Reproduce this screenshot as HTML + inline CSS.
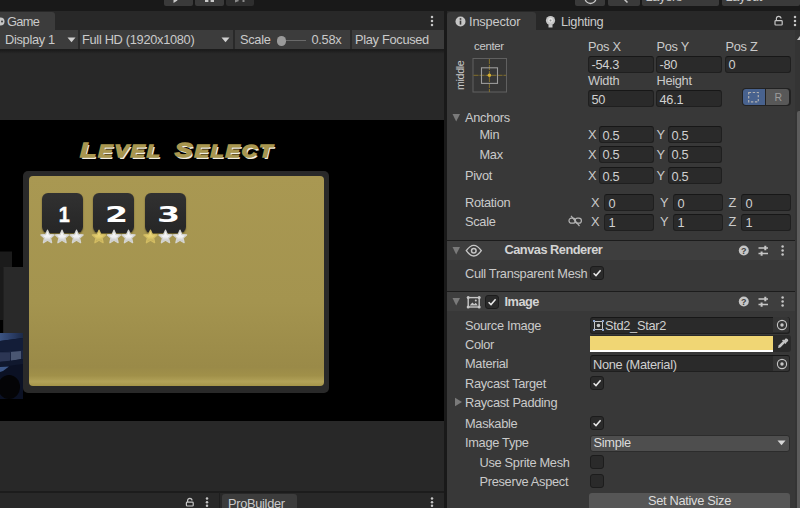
<!DOCTYPE html>
<html><head><meta charset="utf-8"><title>Unity</title>
<style>
html,body{margin:0;padding:0;}
body{width:800px;height:508px;overflow:hidden;background:#282828;position:relative;font-family:"Liberation Sans",sans-serif;}
.a{position:absolute;}
.t{position:absolute;font-size:12.8px;letter-spacing:-0.3px;line-height:16px;color:#cacaca;white-space:nowrap;}
.f{position:absolute;background:#2a2a2a;border:1px solid #1f1f1f;border-top-color:#171717;border-radius:3px;box-sizing:border-box;height:17px;}
.f span{position:absolute;left:3px;top:0.5px;font-size:12.8px;letter-spacing:-0.3px;line-height:15px;color:#d0d0d0;white-space:nowrap;}
.cb{position:absolute;width:13.5px;height:14px;background:#2a2a2a;border:1px solid #1c1c1c;border-radius:3px;box-sizing:border-box;}
.cb svg{position:absolute;left:1px;top:1px;}
.lvl{background:linear-gradient(#313131,#262626);border-radius:6px;box-shadow:0 1px 1.5px rgba(30,25,5,0.55);}
.tb{position:absolute;top:0;height:5.5px;background:#3a3a3a;border-radius:0 0 2px 2px;overflow:hidden;}
</style></head><body>

<!-- top toolbar -->
<div class="a" style="left:0;top:0;width:800px;height:11px;background:#191919;"></div>
<div class="tb" style="left:164px;width:29px;"><svg class="a" style="left:0;top:0" width="29" height="6"><path d="M9.5 -6 L13.5 0.6 L9.5 3 Z" fill="#c8c8c8"/></svg></div>
<div class="tb" style="left:195px;width:29px;"><svg class="a" style="left:0;top:0" width="29" height="6"><rect x="10" y="-3" width="3.4" height="5" fill="#c8c8c8"/><rect x="15.6" y="-3" width="3.4" height="5" fill="#c8c8c8"/></svg></div>
<div class="tb" style="left:226px;width:28px;background:#2e2e2e;"><svg class="a" style="left:0;top:0" width="28" height="6"><path d="M9 -4 L13 1 L9 2.5 Z" fill="#8a8a8a"/><rect x="16.5" y="-3" width="2" height="5" fill="#8a8a8a"/></svg></div>
<div class="tb" style="left:574.5px;width:30.5px;"><svg class="a" style="left:0;top:0" width="31" height="6"><path d="M10 -2 A5.5 5.5 0 0 0 21 -2" fill="none" stroke="#c8c8c8" stroke-width="1.3"/></svg></div>
<div class="tb" style="left:608px;width:31.5px;"><svg class="a" style="left:0;top:0" width="32" height="6"><path d="M16 -1 L19.5 2.6" fill="none" stroke="#c8c8c8" stroke-width="1.5"/></svg></div>
<div class="tb" style="left:642px;width:77px;"><div class="t" style="left:3.5px;top:-11px;">Layers</div></div>
<div class="tb" style="left:722px;width:78px;"><div class="t" style="left:3.5px;top:-11px;">Layout</div></div>

<!-- tab bar left -->
<div class="a" style="left:0;top:11px;width:444px;height:19px;background:#282828;"></div>
<div class="a" style="left:0;top:12px;width:55px;height:18px;background:#3c3c3c;border-radius:0 3px 0 0;"></div>
<svg class="a" style="left:-4px;top:17px" width="9" height="9"><circle cx="4.5" cy="4.5" r="4" fill="#c6c6c6"/><circle cx="6" cy="4.5" r="1" fill="#3c3c3c"/></svg>
<div class="t" style="left:7px;top:14px;letter-spacing:-0.7px;">Game</div>
<svg class="a" style="left:429px;top:15px" width="6" height="13"><circle cx="3" cy="2" r="1.25" fill="#c6c6c6"/><circle cx="3" cy="6" r="1.25" fill="#c6c6c6"/><circle cx="3" cy="10" r="1.25" fill="#c6c6c6"/></svg>

<!-- game toolbar -->
<div class="a" style="left:0;top:30px;width:444px;height:19.2px;background:#3c3c3c;border-bottom:1.3px solid #1c1c1c;"></div>
<div class="a" style="left:77.8px;top:30px;width:1.8px;height:19px;background:#292929;"></div>
<div class="a" style="left:233.3px;top:30px;width:1.8px;height:19px;background:#292929;"></div>
<div class="a" style="left:350.3px;top:30px;width:1.8px;height:19px;background:#292929;"></div>
<div class="t" style="left:5px;top:32px;">Display 1</div>
<svg class="a" style="left:66.7px;top:37px" width="9" height="6"><path d="M0.5 0.5 L8.5 0.5 L4.5 5.2 Z" fill="#d0d0d0"/></svg>
<div class="t" style="left:82px;top:32px;">Full HD (1920x1080)</div>
<svg class="a" style="left:221px;top:37px" width="9" height="6"><path d="M0.5 0.5 L8.5 0.5 L4.5 5.2 Z" fill="#d0d0d0"/></svg>
<div class="t" style="left:240px;top:32px;">Scale</div>
<div class="a" style="left:281px;top:40px;width:25px;height:1.2px;background:#6a6a6a;"></div>
<div class="a" style="left:276.5px;top:36px;width:9.5px;height:9.5px;border-radius:5px;background:#9a9a9a;"></div>
<div class="t" style="left:311.5px;top:32px;">0.58x</div>
<div class="t" style="left:355px;top:32px;">Play Focused</div>

<!-- game view -->
<div class="a" style="left:0;top:50px;width:444px;height:70px;background:linear-gradient(#1b1b1b 0px,#202020 1.5px,#272727 3.5px,#282828 4px);"></div>
<div class="a" style="left:0;top:120px;width:444px;height:301.4px;background:#000;"></div>
<div class="a" style="left:0;top:421px;width:444px;height:69px;background:#282828;"></div>

<!-- 3D stuff at left -->
<svg class="a" style="left:0;top:240px" width="30" height="160">
  <defs><linearGradient id="bl" x1="0" y1="0" x2="1" y2="0"><stop offset="0" stop-color="#3c5482"/><stop offset="0.5" stop-color="#2c3f68"/><stop offset="1" stop-color="#1c2946"/></linearGradient></defs>
  <rect x="0" y="11.5" width="12" height="16" fill="#1b1b1b"/>
  <rect x="0" y="27" width="3.2" height="53" fill="#1a1a1a"/>
  <rect x="3.2" y="27" width="20" height="66" fill="#292929"/>
  <rect x="0" y="93" width="23" height="66" fill="#0b1124"/>
  <path d="M0 93 H23 V98 L0 101 Z" fill="url(#bl)"/>
  <path d="M0 101 L23 98 V110 L0 112 Z" fill="#131d38"/>
  <path d="M0 112 L23 110 V119 L0 122 Z" fill="#1a2440"/>
  <rect x="0" y="112.5" width="10" height="9" fill="#2c3654"/>
  <path d="M11 112 L21 111 V119 L11 121 Z" fill="#4a5672"/>
  <path d="M0 122 L23 119 V124 L0 127 Z" fill="#10182e"/>
  <path d="M0 127 L9 126.5 L3 131 L0 132 Z" fill="#3e5888"/>
  <ellipse cx="9" cy="147" rx="11" ry="12" fill="#040406"/>
</svg>

<!-- level select -->
<div id="title" class="a" style="left:80px;top:138px;font:italic bold 16px 'Liberation Sans',sans-serif;color:#a8964f;letter-spacing:1.5px;white-space:nowrap;text-shadow:1.2px 2.2px 0 #f2eee0;-webkit-text-stroke:1.3px #a8964f;transform-origin:0 0;transform:scaleX(1.33);line-height:24px;text-transform:uppercase;"><span style="font-size:20px">L</span>evel <span style="font-size:20px;margin-left:4px">S</span>elect</div>
<div class="a" style="left:23.2px;top:170.5px;width:306.3px;height:222px;background:#292929;border-radius:5px;"></div>
<div class="a" style="left:29.2px;top:176px;width:294.6px;height:210px;border-radius:4px;background:linear-gradient(#a99852 0%,#a4944f 60%,#9a8a48 91%,#a09049 95%,#b2a258 98%,#a49448 100%);"></div>

<!-- level buttons -->
<div class="a lvl" style="left:42px;top:192.6px;width:41px;height:40px;"></div>
<div class="a lvl" style="left:93.2px;top:192.6px;width:41.2px;height:40px;"></div>
<div class="a lvl" style="left:145.3px;top:192.6px;width:41px;height:40px;"></div>
<div class="a dg" style="left:44px;top:203.5px;width:40.5px;text-align:center;font:bold 22px 'Liberation Sans',sans-serif;-webkit-text-stroke:0.5px #fff;color:#fff;line-height:22px;transform:scaleX(0.9);">1</div>
<div class="a dg" style="left:96px;top:204px;width:41px;text-align:center;font:bold 20.5px 'DejaVu Sans','Liberation Sans',sans-serif;color:#fff;line-height:22px;transform:scaleX(1.62);">2</div>
<div class="a dg" style="left:147.6px;top:204px;width:41px;text-align:center;font:bold 20.5px 'DejaVu Sans','Liberation Sans',sans-serif;color:#fff;line-height:22px;transform:scaleX(1.62);">3</div>
<svg class="a" style="left:38px;top:228px" width="152" height="18">
 <defs> <linearGradient id="gw" x1="0" y1="0" x2="0" y2="1"><stop offset="0" stop-color="#ffffff"/><stop offset="0.55" stop-color="#f0f0f0"/><stop offset="1" stop-color="#b4b4b4"/></linearGradient>
 <linearGradient id="gy" x1="0" y1="0" x2="0" y2="1"><stop offset="0" stop-color="#f6e48c"/><stop offset="0.55" stop-color="#e2cc6c"/><stop offset="1" stop-color="#b29e50"/></linearGradient></defs>
 <g fill="url(#gw)" stroke="#d4d4d0" stroke-width="1.3" stroke-linejoin="round">
  <path transform="translate(9.5 8.8)" d="M0 -6.6 L1.9 -2.3 L6.6 -1.8 L3.1 1.3 L4.1 5.9 L0 3.5 L-4.1 5.9 L-3.1 1.3 L-6.6 -1.8 L-1.9 -2.3 Z"/><path transform="translate(24 8.8)" d="M0 -6.6 L1.9 -2.3 L6.6 -1.8 L3.1 1.3 L4.1 5.9 L0 3.5 L-4.1 5.9 L-3.1 1.3 L-6.6 -1.8 L-1.9 -2.3 Z"/><path transform="translate(38.5 8.8)" d="M0 -6.6 L1.9 -2.3 L6.6 -1.8 L3.1 1.3 L4.1 5.9 L0 3.5 L-4.1 5.9 L-3.1 1.3 L-6.6 -1.8 L-1.9 -2.3 Z"/>
  <path transform="translate(76 8.8)" d="M0 -6.6 L1.9 -2.3 L6.6 -1.8 L3.1 1.3 L4.1 5.9 L0 3.5 L-4.1 5.9 L-3.1 1.3 L-6.6 -1.8 L-1.9 -2.3 Z"/><path transform="translate(90.5 8.8)" d="M0 -6.6 L1.9 -2.3 L6.6 -1.8 L3.1 1.3 L4.1 5.9 L0 3.5 L-4.1 5.9 L-3.1 1.3 L-6.6 -1.8 L-1.9 -2.3 Z"/>
  <path transform="translate(127.5 8.8)" d="M0 -6.6 L1.9 -2.3 L6.6 -1.8 L3.1 1.3 L4.1 5.9 L0 3.5 L-4.1 5.9 L-3.1 1.3 L-6.6 -1.8 L-1.9 -2.3 Z"/><path transform="translate(142 8.8)" d="M0 -6.6 L1.9 -2.3 L6.6 -1.8 L3.1 1.3 L4.1 5.9 L0 3.5 L-4.1 5.9 L-3.1 1.3 L-6.6 -1.8 L-1.9 -2.3 Z"/>
 </g>
 <g fill="url(#gy)" stroke="#d2bc62" stroke-width="1.3" stroke-linejoin="round">
  <path transform="translate(61 8.8)" d="M0 -6.6 L1.9 -2.3 L6.6 -1.8 L3.1 1.3 L4.1 5.9 L0 3.5 L-4.1 5.9 L-3.1 1.3 L-6.6 -1.8 L-1.9 -2.3 Z"/><path transform="translate(112.5 8.8)" d="M0 -6.6 L1.9 -2.3 L6.6 -1.8 L3.1 1.3 L4.1 5.9 L0 3.5 L-4.1 5.9 L-3.1 1.3 L-6.6 -1.8 L-1.9 -2.3 Z"/>
 </g>
</svg>

<!-- bottom tab bar left -->
<div class="a" style="left:0;top:491px;width:444px;height:18px;background:#282828;border-top:2px solid #1c1c1c;box-sizing:border-box;"></div><div class="a" style="left:219px;top:492px;width:1px;height:16px;background:#1e1e1e;"></div>
<svg class="a" style="left:184px;top:495px" width="12" height="14"><path d="M3.6 7 V5.6 A2.2 2.2 0 0 1 8 5.6" fill="none" stroke="#c6c6c6" stroke-width="1.2"/><rect x="2.4" y="7.2" width="6.8" height="3.8" rx="0.8" fill="none" stroke="#c6c6c6" stroke-width="1.2"/></svg>
<svg class="a" style="left:203.5px;top:496px" width="6" height="14"><circle cx="3" cy="2.6" r="1.25" fill="#c6c6c6"/><circle cx="3" cy="6.2" r="1.25" fill="#c6c6c6"/><circle cx="3" cy="9.8" r="1.25" fill="#c6c6c6"/></svg>
<svg class="a" style="left:428.8px;top:496px" width="6" height="14"><circle cx="3" cy="2.6" r="1.25" fill="#c6c6c6"/><circle cx="3" cy="6.2" r="1.25" fill="#c6c6c6"/><circle cx="3" cy="9.8" r="1.25" fill="#c6c6c6"/></svg>
<div class="a" style="left:221.5px;top:493.5px;width:75.5px;height:15px;background:#3c3c3c;border-radius:3px 3px 0 0;"></div>
<div class="t" style="left:228px;top:495.5px;">ProBuilder</div>

<!-- splitter -->
<div class="a" style="left:444px;top:11px;width:2.5px;height:497px;background:#191919;"></div>

<!-- inspector -->
<div class="a" style="left:446.5px;top:11px;width:353.5px;height:19px;background:#282828;"></div>
<div class="a" style="left:446.5px;top:30px;width:353.5px;height:478px;background:#383838;"></div>
<div class="a" style="left:446.5px;top:12px;width:89.5px;height:18px;background:#383838;border-radius:3px 3px 0 0;"></div>
<svg class="a" style="left:455px;top:16px" width="11" height="11"><circle cx="5.5" cy="5.5" r="5" fill="#c6c6c6"/><rect x="4.7" y="4.6" width="1.6" height="4" fill="#383838"/><rect x="4.7" y="2.2" width="1.6" height="1.6" fill="#383838"/></svg>
<div class="t" style="left:469px;top:14px;letter-spacing:-0.15px;">Inspector</div>
<svg class="a" style="left:545px;top:15px" width="11" height="14"><circle cx="5.5" cy="5.5" r="4.6" fill="#c6c6c6"/><rect x="3.5" y="9.5" width="4" height="3" fill="#c6c6c6"/><circle cx="5.5" cy="5.2" r="2.4" fill="#e4e4e4"/><circle cx="5.5" cy="5.4" r="1" fill="#909090"/></svg>
<div class="t" style="left:561px;top:14px;">Lighting</div>
<svg class="a" style="left:772.5px;top:14px" width="13" height="14"><path d="M3.4 6.6 V4.6 A2.3 2.3 0 0 1 8 4.6" fill="none" stroke="#c6c6c6" stroke-width="1.2"/><rect x="2" y="6.6" width="7.2" height="4.4" rx="0.8" fill="none" stroke="#c6c6c6" stroke-width="1.2"/></svg>
<svg class="a" style="left:792px;top:15px" width="6" height="13"><circle cx="3" cy="2" r="1.25" fill="#c6c6c6"/><circle cx="3" cy="6" r="1.25" fill="#c6c6c6"/><circle cx="3" cy="10" r="1.25" fill="#c6c6c6"/></svg>

<!-- scrollbar -->
<div class="a" style="left:795px;top:30px;width:5px;height:478px;background:#343434;"></div>
<div class="a" style="left:797px;top:111px;width:3px;height:397px;background:#5c5c5c;border-radius:2px 0 0 0;"></div>
<svg class="a" style="left:797px;top:36px" width="3" height="5"><path d="M0 4 L3 0 L3 4Z" fill="#c6c6c6"/></svg>

<!-- rect transform -->
<div class="t" style="left:474px;top:38px;font-size:11.4px;">center</div>
<div class="t" style="left:461px;top:75px;font-size:10.6px;transform-origin:0 0;transform:translate(-9px,15px) rotate(-90deg);">middle</div>
<svg class="a" style="left:472px;top:57px" width="36" height="37">
  <rect x="1" y="1.5" width="33.5" height="33.5" fill="#363636" stroke="#606060" stroke-width="1"/>
  <path d="M17.4 2 V35 M1.5 18.3 H34" stroke="#84702c" stroke-width="1" stroke-dasharray="5 1"/>
  <rect x="9.5" y="10.8" width="16" height="15.6" fill="none" stroke="#9c9c9c" stroke-width="1.1"/>
  <circle cx="17.4" cy="18.3" r="1.8" fill="#d4ae34"/>
</svg>

<div class="t" style="left:588px;top:38.5px;">Pos X</div>
<div class="t" style="left:656.5px;top:38.5px;">Pos Y</div>
<div class="t" style="left:725.5px;top:38.5px;">Pos Z</div>
<div class="f" style="left:587.5px;top:55.5px;width:66px;"><span>-54.3</span></div>
<div class="f" style="left:655.5px;top:55.5px;width:66px;"><span>-80</span></div>
<div class="f" style="left:724.5px;top:55.5px;width:66.5px;"><span>0</span></div>
<div class="t" style="left:588px;top:73px;">Width</div>
<div class="t" style="left:656.5px;top:73px;">Height</div>
<div class="f" style="left:587.5px;top:90px;width:66px;"><span>50</span></div>
<div class="f" style="left:655.5px;top:90px;width:66px;"><span>46.1</span></div>
<div class="a" style="left:741.5px;top:87.7px;width:49px;height:18.3px;background:#222;border-radius:4px;"></div>
<div class="a" style="left:742.5px;top:88.7px;width:22.5px;height:16.3px;background:#48628e;border-radius:3px 0 0 3px;"></div>
<div class="a" style="left:765.8px;top:88.7px;width:23.7px;height:16.3px;background:#585858;border-radius:0 3px 3px 0;"></div>
<svg class="a" style="left:747px;top:90.5px" width="14" height="13"><rect x="1.7" y="1.5" width="9.6" height="9.4" fill="none" stroke="#b0b0b0" stroke-width="1.2" stroke-dasharray="2.4 1.6"/></svg>
<div class="t" style="left:774.5px;top:89px;color:#9c9c9c;font-size:10.5px;">R</div>

<svg class="a" style="left:452.4px;top:113px" width="9" height="10"><path d="M0.5 1 L8 1 L4.2 8.5 Z" fill="#7a7a7a"/></svg>
<div class="t" style="left:465px;top:110px;">Anchors</div>
<div class="t" style="left:479.5px;top:127px;">Min</div>
<div class="t" style="left:479.5px;top:146.5px;">Max</div>
<div class="t" style="left:465px;top:167.5px;">Pivot</div>
<div class="t" style="left:465px;top:194.5px;">Rotation</div>
<div class="t" style="left:465px;top:214px;">Scale</div>

<div class="t" style="left:588px;top:127px;">X</div><div class="f" style="left:598.5px;top:126px;width:55px;"><span>0.5</span></div>
<div class="t" style="left:656.5px;top:127px;">Y</div><div class="f" style="left:667.5px;top:126px;width:54px;"><span>0.5</span></div>
<div class="t" style="left:588px;top:146.5px;">X</div><div class="f" style="left:598.5px;top:145.5px;width:55px;"><span>0.5</span></div>
<div class="t" style="left:656.5px;top:146.5px;">Y</div><div class="f" style="left:667.5px;top:145.5px;width:54px;"><span>0.5</span></div>
<div class="t" style="left:588px;top:167.5px;">X</div><div class="f" style="left:598.5px;top:167px;width:55px;"><span>0.5</span></div>
<div class="t" style="left:656.5px;top:167.5px;">Y</div><div class="f" style="left:667.5px;top:167px;width:54px;"><span>0.5</span></div>

<div class="t" style="left:591px;top:194.5px;">X</div><div class="f" style="left:604px;top:194px;width:50px;"><span style="left:3.5px">0</span></div>
<div class="t" style="left:660px;top:194.5px;">Y</div><div class="f" style="left:673px;top:194px;width:49.5px;"><span style="left:3.5px">0</span></div>
<div class="t" style="left:728.5px;top:194.5px;">Z</div><div class="f" style="left:741px;top:194px;width:50px;"><span style="left:3.5px">0</span></div>
<div class="t" style="left:591px;top:214px;">X</div><div class="f" style="left:604px;top:213.5px;width:50px;"><span style="left:3.5px">1</span></div>
<div class="t" style="left:660px;top:214px;">Y</div><div class="f" style="left:673px;top:213.5px;width:49.5px;"><span style="left:3.5px">1</span></div>
<div class="t" style="left:728.5px;top:214px;">Z</div><div class="f" style="left:741px;top:213.5px;width:50px;"><span style="left:3.5px">1</span></div>
<svg class="a" style="left:568px;top:215px" width="15" height="12"><g fill="none" stroke="#b4b4b4" stroke-width="1.2"><rect x="1" y="3.2" width="6.4" height="5" rx="2.5"/><rect x="7" y="3.2" width="6.4" height="5" rx="2.5"/><path d="M3 0.8 L11.5 11"/></g></svg>

<!-- Canvas Renderer header -->
<div class="a" style="left:446.5px;top:240px;width:348.5px;height:20px;background:#3e3e3e;border-top:1px solid #1c1c1c;box-sizing:border-box;"></div>
<svg class="a" style="left:452.4px;top:245.5px" width="9" height="10"><path d="M0.5 1 L8 1 L4.2 8.5 Z" fill="#7a7a7a"/></svg>
<svg class="a" style="left:465px;top:243.5px" width="18" height="14"><path d="M1.3 6.7 Q8.8 -4 16.3 6.7 Q8.8 17.4 1.3 6.7 Z" fill="none" stroke="#c6c6c6" stroke-width="1.4"/><circle cx="8.8" cy="6.7" r="2.3" fill="none" stroke="#c6c6c6" stroke-width="1.5"/></svg>
<div class="t" style="left:504.5px;top:242px;font-weight:bold;color:#d4d4d4;letter-spacing:-0.5px;">Canvas Renderer</div>
<div class="t" style="left:465px;top:266px;">Cull Transparent Mesh</div>
<div class="cb" style="left:590px;top:266px;"><svg width="10" height="10"><path d="M1.6 5.2 L4 7.6 L8.6 2.2" fill="none" stroke="#e8e8e8" stroke-width="1.5"/></svg></div>

<!-- Image header -->
<div class="a" style="left:446.5px;top:291px;width:348.5px;height:20px;background:#3e3e3e;border-top:1px solid #1c1c1c;box-sizing:border-box;"></div>
<svg class="a" style="left:452.4px;top:296.5px" width="9" height="10"><path d="M0.5 1 L8 1 L4.2 8.5 Z" fill="#7a7a7a"/></svg>
<svg class="a" style="left:466px;top:294.5px" width="16" height="15"><rect x="2.2" y="2.6" width="11" height="9.4" fill="none" stroke="#c6c6c6" stroke-width="1.4"/><path d="M3.6 10.6 L6.4 7.4 L8.2 9.2 L9.8 7.8 L11.8 10.6 Z" fill="#c6c6c6"/><circle cx="9.8" cy="5.4" r="1" fill="#c6c6c6"/><g fill="#c6c6c6"><circle cx="2.2" cy="2.6" r="1.5"/><circle cx="13.2" cy="2.6" r="1.5"/><circle cx="2.2" cy="12" r="1.5"/><circle cx="13.2" cy="12" r="1.5"/></g></svg>
<div class="cb" style="left:485px;top:295px;"><svg width="10" height="10"><path d="M1.6 5.2 L4 7.6 L8.6 2.2" fill="none" stroke="#e8e8e8" stroke-width="1.5"/></svg></div>
<div class="t" style="left:504.5px;top:293.5px;font-weight:bold;color:#d4d4d4;letter-spacing:-0.5px;">Image</div>

<!-- header icons -->
<svg class="a" style="left:737px;top:243.5px" width="56" height="14">
 <circle cx="6.8" cy="6.5" r="5" fill="#c6c6c6"/><text x="6.8" y="9.8" font-size="9" font-weight="bold" text-anchor="middle" fill="#3e3e3e" font-family="Liberation Sans, sans-serif">?</text>
 <g stroke="#c6c6c6" stroke-width="1.5" fill="none"><path d="M21.5 4 H31 M21.5 9.6 H31"/><path d="M28.3 1.8 V6.2 M24.6 7.4 V11.8" stroke-width="2"/></g>
 <circle cx="45.6" cy="2.5" r="1.25" fill="#c6c6c6"/><circle cx="45.6" cy="6.5" r="1.25" fill="#c6c6c6"/><circle cx="45.6" cy="10.5" r="1.25" fill="#c6c6c6"/>
</svg>
<svg class="a" style="left:737px;top:294.5px" width="56" height="14">
 <circle cx="6.8" cy="6.5" r="5" fill="#c6c6c6"/><text x="6.8" y="9.8" font-size="9" font-weight="bold" text-anchor="middle" fill="#3e3e3e" font-family="Liberation Sans, sans-serif">?</text>
 <g stroke="#c6c6c6" stroke-width="1.5" fill="none"><path d="M21.5 4 H31 M21.5 9.6 H31"/><path d="M28.3 1.8 V6.2 M24.6 7.4 V11.8" stroke-width="2"/></g>
 <circle cx="45.6" cy="2.5" r="1.25" fill="#c6c6c6"/><circle cx="45.6" cy="6.5" r="1.25" fill="#c6c6c6"/><circle cx="45.6" cy="10.5" r="1.25" fill="#c6c6c6"/>
</svg>

<!-- Image props -->
<div class="t" style="left:465px;top:317.5px;">Source Image</div>
<div class="f" style="left:590px;top:316.5px;width:200px;"><span style="left:14px">Std2_Star2</span></div>
<svg class="a" style="left:592.5px;top:319.5px" width="11" height="11"><rect x="1.5" y="1.5" width="8" height="8" fill="none" stroke="#c6c6c6" stroke-width="1"/><circle cx="5.5" cy="5.5" r="1.8" fill="#c6c6c6"/><g fill="#8aa0c8"><rect x="0" y="0" width="2" height="2"/><rect x="9" y="0" width="2" height="2"/><rect x="0" y="9" width="2" height="2"/><rect x="9" y="9" width="2" height="2"/></g></svg>
<div class="a" style="left:773px;top:317px;width:16px;height:15px;background:#353535;border-radius:0 2px 2px 0;"></div>
<svg class="a" style="left:775.5px;top:318.5px" width="12" height="12"><circle cx="6" cy="6" r="4.6" fill="none" stroke="#c6c6c6" stroke-width="1.1"/><circle cx="6" cy="6" r="1.7" fill="#c6c6c6"/></svg>

<div class="t" style="left:465px;top:336.7px;">Color</div>
<div class="a" style="left:589.5px;top:335.3px;width:201px;height:17.2px;background:#2a2a2a;border-radius:3px;"></div>
<div class="a" style="left:590px;top:335.8px;width:183px;height:14px;background:#f0d674;"></div>
<div class="a" style="left:590px;top:349.8px;width:183px;height:2.2px;background:#fff;"></div>
<svg class="a" style="left:776px;top:337.3px" width="13" height="13"><path d="M2 11 L2.6 8.6 L7.2 4 L9 5.8 L4.4 10.4 Z" fill="#c6c6c6"/><path d="M6.6 3 L10 6.4 M8 4.6 L10.2 2.2 A1.3 1.3 0 0 1 11.4 3.6 L9 5.6" stroke="#c6c6c6" stroke-width="1.6" fill="none"/></svg>

<div class="t" style="left:465px;top:356px;">Material</div>
<div class="f" style="left:590px;top:355px;width:200px;"><span style="left:2px">None (Material)</span></div>
<div class="a" style="left:773px;top:356px;width:16px;height:15px;background:#353535;border-radius:0 2px 2px 0;"></div>
<svg class="a" style="left:775.5px;top:357.5px" width="12" height="12"><circle cx="6" cy="6" r="4.6" fill="none" stroke="#c6c6c6" stroke-width="1.1"/><circle cx="6" cy="6" r="1.7" fill="#c6c6c6"/></svg>

<div class="t" style="left:465px;top:375.5px;">Raycast Target</div>
<div class="cb" style="left:590px;top:376px;"><svg width="10" height="10"><path d="M1.6 5.2 L4 7.6 L8.6 2.2" fill="none" stroke="#e8e8e8" stroke-width="1.5"/></svg></div>
<svg class="a" style="left:454px;top:397px" width="9" height="10"><path d="M1 0.8 L8 5 L1 9.2 Z" fill="#7a7a7a"/></svg>
<div class="t" style="left:465px;top:394.5px;">Raycast Padding</div>
<div class="t" style="left:465px;top:415.5px;">Maskable</div>
<div class="cb" style="left:590px;top:416px;"><svg width="10" height="10"><path d="M1.6 5.2 L4 7.6 L8.6 2.2" fill="none" stroke="#e8e8e8" stroke-width="1.5"/></svg></div>
<div class="t" style="left:465px;top:435px;">Image Type</div>
<div class="a" style="left:590px;top:434.5px;width:200px;height:17px;background:#4e4e4e;border:1px solid #2c2c2c;border-radius:3px;box-sizing:border-box;"></div>
<div class="t" style="left:593.5px;top:435px;color:#dcdcdc;">Simple</div>
<svg class="a" style="left:777px;top:440px" width="9" height="6"><path d="M0.5 0.5 L8.5 0.5 L4.5 5.2 Z" fill="#d8d8d8"/></svg>
<div class="t" style="left:479.5px;top:454.5px;">Use Sprite Mesh</div>
<div class="cb" style="left:590px;top:455px;"></div>
<div class="t" style="left:479.5px;top:473.5px;">Preserve Aspect</div>
<div class="cb" style="left:590px;top:474px;"></div>
<div class="a" style="left:589px;top:493px;width:201px;height:17px;background:#565656;border-radius:3px 3px 0 0;"></div>
<div class="t" style="left:589px;top:493px;width:201px;text-align:center;color:#dcdcdc;">Set Native Size</div>

</body></html>
